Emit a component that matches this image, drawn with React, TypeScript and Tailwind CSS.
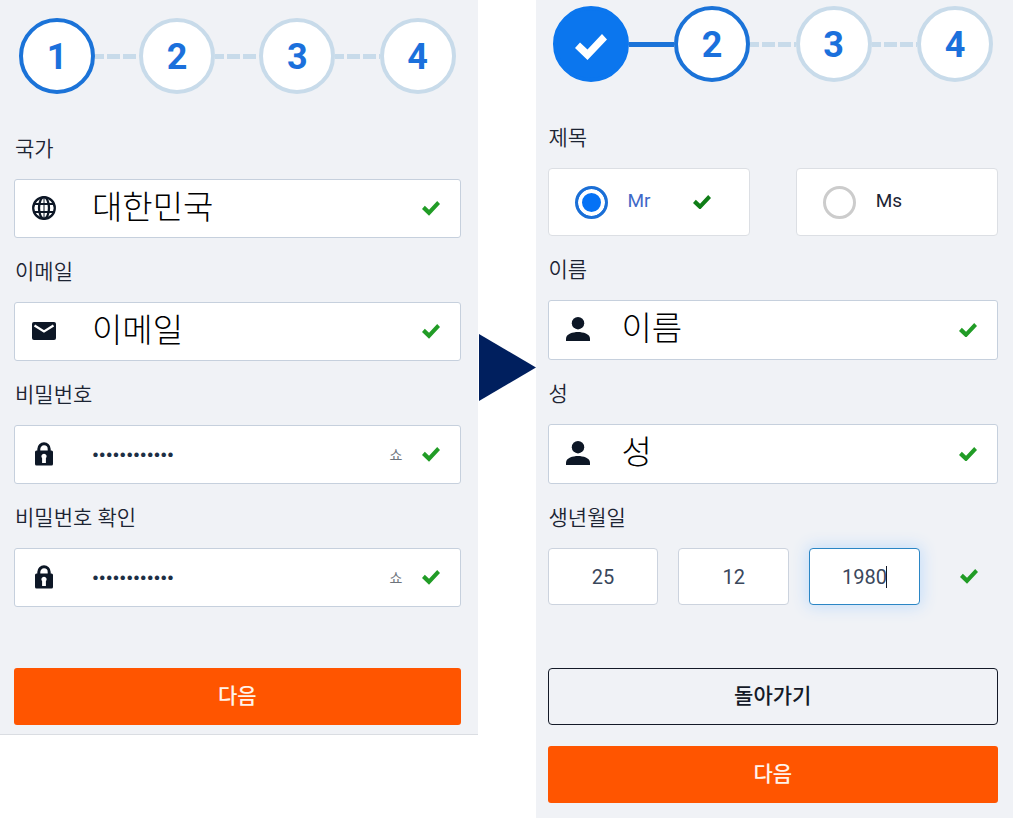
import { Fragment, useState } from "react";
import type { ReactNode } from "react";

const PANEL_FONT = "font-[Roboto,'Noto_Sans_CJK_KR',sans-serif]";

function Tick({ className }: { className: string }) {
  return (
    <svg viewBox="0 0 32 26" className={`shrink-0 ${className}`} fill="currentColor" aria-hidden="true">
      <path d="M0 14 5 8.500l7.500 7L27 0l5 5.500L12.500 26z" />
    </svg>
  );
}

function GlobeIcon() {
  return (
    <svg viewBox="0 0 24 24" className="w-6 h-6" fill="none" stroke="currentColor" strokeWidth="2.300" aria-hidden="true">
      <circle cx="12" cy="12" r="10.800" />
      <ellipse cx="12" cy="12" rx="5" ry="10.800" />
      <path d="M2 8h20M2 16h20" strokeWidth="2" />
      <path d="M12 1v22" strokeWidth="1" />
    </svg>
  );
}

function MailIcon() {
  return (
    <svg viewBox="0 0 24 18" className="w-6" aria-hidden="true">
      <rect width="24" height="18" rx="2" fill="currentColor" />
      <path d="m2.500 3.500 9.500 6 9.500-6" fill="none" stroke="white" strokeWidth="2.200" />
    </svg>
  );
}

function LockIcon() {
  return (
    <svg viewBox="0 0 18 24" className="w-[18px]" aria-hidden="true">
      <path d="M3.800 10V7a5.200 5.200 0 0 1 10.400 0v3" fill="none" stroke="currentColor" strokeWidth="3" />
      <rect y="8.500" width="18" height="15" rx="1.500" fill="currentColor" />
      <path d="M9 11.800a2.600 2.600 0 0 1 1.900 4.400V21H7.100v-4.800A2.600 2.600 0 0 1 9 11.800z" fill="white" />
    </svg>
  );
}

function PersonIcon() {
  return (
    <svg viewBox="0 0 24 24" className="w-6" fill="currentColor" aria-hidden="true">
      <circle cx="12" cy="6.200" r="6.200" />
      <path d="M0 24v-2.500C0 17 7 15 12 15s12 2 12 6.500V24z" />
    </svg>
  );
}

function Stepper({ current }: { current: number }) {
  return (
    <ol className="flex items-center px-[5px]">
      {[1, 2, 3, 4].map((n) => (
        <Fragment key={n}>
          {n > 1 && (
            <li
              aria-hidden="true"
              className={
                n <= current
                  ? "h-[5px] flex-1 bg-[#1b73d8]"
                  : "h-[5px] flex-1 bg-[repeating-linear-gradient(90deg,#c8dbea_0_9px,transparent_9px_12px,#c8dbea_12px_16px)]"
              }
            />
          )}
          <li
            aria-current={n === current ? "step" : undefined}
            className={`flex size-[76px] shrink-0 items-center justify-center rounded-full border-4 pt-[2px] text-4xl font-bold ${
              n < current
                ? "border-[#0b76ee] bg-[#0b76ee] text-white"
                : n === current
                  ? "border-[#1b73d8] bg-white text-[#1b70dc]"
                  : "border-[#c8dbea] bg-white text-[#1b70dc]"
            }`}
          >
            {n < current ? <Tick className="mt-1 w-8" /> : n}
          </li>
        </Fragment>
      ))}
    </ol>
  );
}

const captionClass = "flex h-16 items-center pt-[6px] pl-px text-[21px] font-[350] text-[#1c2433]";

type FieldProps = {
  id: string;
  label: string;
  icon: ReactNode;
  initial: string;
  boxClass: string;
  secret?: boolean;
};

function Field({ id, label, icon, initial, boxClass, secret }: FieldProps) {
  const [value, setValue] = useState(initial);
  const [shown, setShown] = useState(false);
  return (
    <div>
      <label htmlFor={id} className={captionClass}>
        {label}
      </label>
      <div className={`flex items-center rounded-[3px] border border-[#c6d0dd] bg-white pr-5 ${boxClass}`}>
        <span className="flex w-[58px] shrink-0 justify-center pb-[2px] text-[#0d1726]">{icon}</span>
        <input
          id={id}
          type={secret && !shown ? "password" : "text"}
          value={value}
          onChange={(e) => setValue(e.target.value)}
          className={
            secret
              ? "h-full min-w-0 flex-1 bg-transparent pt-[2px] text-[19px] font-bold text-[#1d2f45] outline-none"
              : "h-full min-w-0 flex-1 bg-transparent pb-2 text-[33px] font-light text-black outline-none"
          }
        />
        {secret && (
          <button type="button" onClick={() => setShown(!shown)} className="text-sm text-[#6d747c]">
            쇼
          </button>
        )}
        <Tick className="w-[18px] text-[#219c26]" />
      </div>
    </div>
  );
}

function TitleOption({ label, checked, onSelect }: { label: string; checked: boolean; onSelect: () => void }) {
  return (
    <label className="flex h-[68px] min-w-0 flex-1 items-center rounded-[4px] border border-[#dcdfe4] bg-white pl-[26px]">
      <input
        type="radio"
        name="title"
        checked={checked}
        onChange={onSelect}
        className="size-[33px] shrink-0 appearance-none rounded-full border-[3px] border-[#cccccc] bg-white checked:border-[#1b6fd6] checked:bg-[#0572f5] checked:shadow-[inset_0_0_0_4px_white]"
      />
      <span className={`ml-5 w-[65px] pb-[2px] text-[19px] ${checked ? "text-[#3f69c8]" : "text-[#1c2433]"}`}>
        {label}
      </span>
      {checked && <Tick className="w-[18px] text-[#0f7d17]" />}
    </label>
  );
}

function DatePart({ label, initial, active }: { label: string; initial: string; active?: boolean }) {
  const [value, setValue] = useState(initial);
  return (
    <div className="relative min-w-0 flex-1">
      <input
        aria-label={label}
        value={value}
        onChange={(e) => setValue(e.target.value)}
        className={`h-[57px] w-full rounded-[4px] border-[1px] bg-white text-center text-xl text-[#3a475c] outline-none ${
          active ? "border-[#2b86c5] shadow-[0_0_16px_2px_#c5defa]" : "border-[#ccd3de]"
        }`}
      />
      {active && <span className="absolute top-[18px] left-1/2 ml-[21px] h-[22px] w-px bg-[#111827]" />}
    </div>
  );
}

const nextClass = "block h-[57px] w-full rounded-[3px] bg-[#ff5500] text-[21px] font-medium text-[#fff3ea]";
const leftBox = "h-[59px] gap-[19px]";
const rightBox = "h-[60px] gap-[15px]";

export default function App() {
  const [title, setTitle] = useState("Mr");
  return (
    <main className={`grid min-h-screen grid-cols-[1fr_58px_1fr] items-start bg-white ${PANEL_FONT}`}>
      <form className="min-w-0 border-b border-[#dadde2] bg-[#f0f2f6] pt-[18px] pr-[17px] pb-[9px] pl-[14px]">
        <Stepper current={1} />
        <div className="mt-[21px]">
          <Field id="country" label="국가" icon={<GlobeIcon />} initial="대한민국" boxClass={leftBox} />
          <Field id="email" label="이메일" icon={<MailIcon />} initial="이메일" boxClass={leftBox} />
          <Field id="password" label="비밀번호" icon={<LockIcon />} initial="abcdefgh1234" boxClass={leftBox} secret />
          <Field id="confirm" label="비밀번호 확인" icon={<LockIcon />} initial="abcdefgh1234" boxClass={leftBox} secret />
        </div>
        <button type="button" className={`mt-[61px] ${nextClass}`}>
          다음
        </button>
      </form>

      <div className="flex justify-end pt-[334px]">
        <svg viewBox="0 0 57 67" className="w-[57px]" aria-hidden="true">
          <path d="M0 0 57 33.500 0 67z" fill="#001f5e" />
        </svg>
      </div>

      <form className="min-h-screen min-w-0 bg-[#f0f2f6] pt-[6px] pr-[15px] pb-[15px] pl-3">
        <Stepper current={2} />
        <fieldset className="mt-[22px]">
          <legend className={captionClass}>제목</legend>
          <div className="flex gap-[46px]">
            <TitleOption label="Mr" checked={title === "Mr"} onSelect={() => setTitle("Mr")} />
            <TitleOption label="Ms" checked={title === "Ms"} onSelect={() => setTitle("Ms")} />
          </div>
        </fieldset>
        <Field id="first-name" label="이름" icon={<PersonIcon />} initial="이름" boxClass={rightBox} />
        <Field id="last-name" label="성" icon={<PersonIcon />} initial="성" boxClass={rightBox} />
        <fieldset>
          <legend className={captionClass}>생년월일</legend>
          <div className="flex items-center gap-5">
            <DatePart label="일" initial="25" />
            <DatePart label="월" initial="12" />
            <DatePart label="년" initial="1980" active />
            <span className="flex w-[58px] justify-center">
              <Tick className="w-[18px] text-[#219c26]" />
            </span>
          </div>
        </fieldset>
        <button
          type="button"
          className="mt-[63px] block h-[57px] w-full rounded-[4px] border-[1px] border-[#141a28] text-[21px] font-medium text-[#141a28]"
        >
          돌아가기
        </button>
        <button type="button" className={`mt-[21px] ${nextClass}`}>
          다음
        </button>
      </form>
    </main>
  );
}
